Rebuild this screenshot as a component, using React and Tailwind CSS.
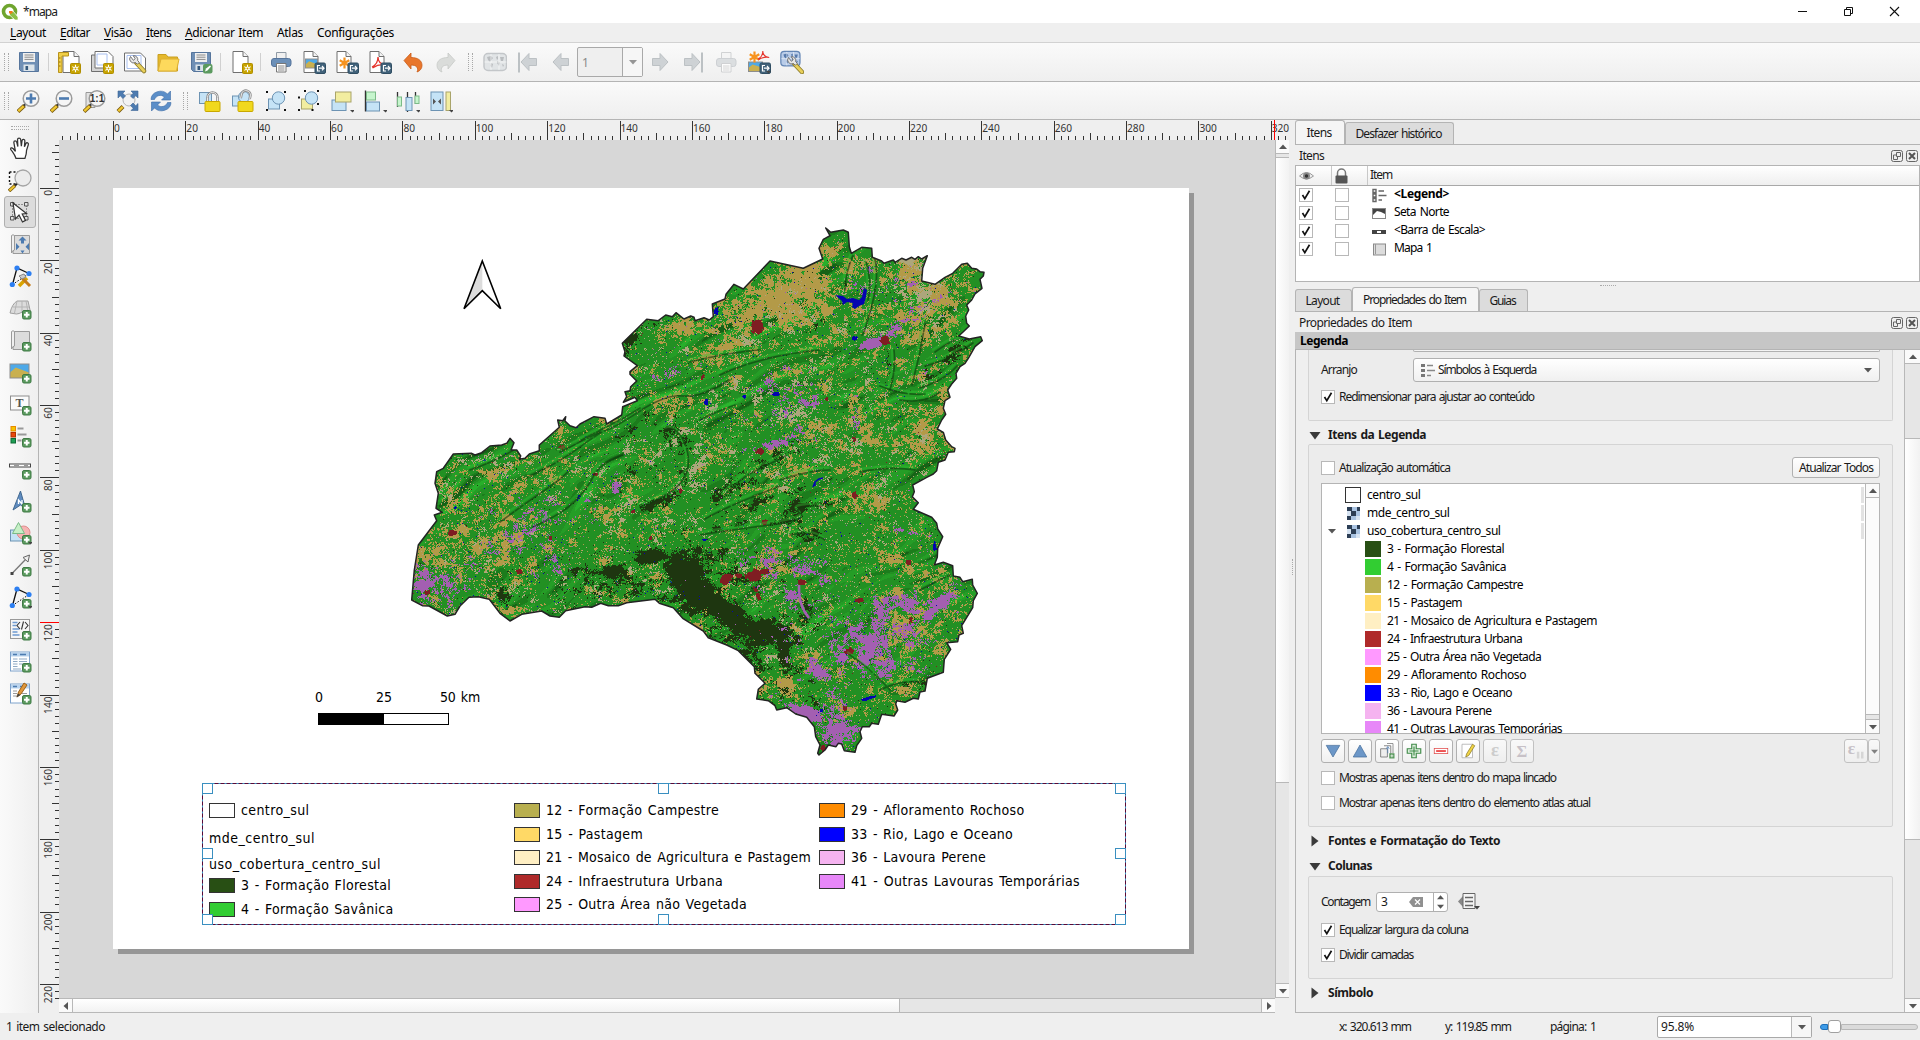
import React, { useLayoutEffect, useRef } from "react";

/* ---------- text that is tracked to an exact width ---------- */
function Fit({ w, className = "", children }) {
  const ref = useRef(null);
  useLayoutEffect(() => {
    const el = ref.current;
    el.style.letterSpacing = "0px";
    const n = el.textContent.length;
    const natural = el.getBoundingClientRect().width;
    el.style.letterSpacing = (w - natural) / n + "px";
  }, [w]);
  return (
    <span ref={ref} className={"inline-block whitespace-pre [word-spacing:1.2px] " + className}>
      {children}
    </span>
  );
}

/* ---------- map geometry (units: a third of a pixel) ---------- */
const third = (ox, oy, s) =>
  s.split(" ").map((p) => {
    const [x, y] = p.split(",").map(Number);
    return [ox + x / 3, oy + y / 3];
  });

const OUTLINE = [
  ...third(680, 200, "437,84 442,88 452,97 490,90 505,97 508,140 514,160 545,142 575,145 577,172 605,183 612,190 640,180 645,187 665,175 678,180 695,172 705,178 715,170 725,177 742,167 728,205 725,243 765,253 795,232 818,220 845,193 862,190 875,205 890,207 900,215 912,217 910,228 900,238 906,265 885,282 875,300 860,315 866,330 857,348 860,370 868,378 850,395 836,408 868,417 902,410 907,422 885,440 865,475 855,490 840,500 828,520 830,535 815,552 803,570 810,592 795,602 790,625 797,643 785,660 772,687 790,697 797,720 815,740 825,745 823,755 805,757 795,780 775,787 770,812 760,822 740,832 698,855 703,875 697,890"),
  ...third(620, 480, "895,68 880,88 935,112 950,130 953,147 968,170 953,205 952,232 943,255 970,247 998,257 1000,288 1020,292 1028,305 1057,298 1058,315 1072,340 1060,362 1058,383 1025,437 1030,460 1017,465 1013,485 980,488 992,508 973,538 970,577 922,595 915,633 900,636 895,657 880,655 855,667 830,662 827,672 833,690 822,708 785,703 775,733 755,730 748,740 727,740 720,755 725,775 710,797 705,817 673,812 665,792 655,790 648,800 625,795 615,810 597,825 593,820 600,795 587,770 583,740 560,712 527,702 500,683 470,690 465,677 445,662 410,657 415,628 435,610 405,580 403,560 355,512 320,495 265,473 250,453 188,415 160,383 118,370 105,358"),
  ...third(400, 200, "680,1208 655,1217 625,1217 602,1210 575,1222 555,1220 497,1232 478,1252 450,1248 425,1233 365,1243 330,1263 300,1240 268,1198 235,1190 207,1192 180,1218 165,1243 142,1248 87,1218 67,1217 35,1200 43,1110 55,1035 110,962 103,945 127,937 108,925 115,880 105,850 110,815 130,805 160,762 215,760 225,765 245,758 270,738 305,735 320,730 330,715 342,728 333,750 350,750 362,768 358,778 375,775 388,762 418,752 418,735 478,682 473,660 488,662 497,650 495,663 510,677 528,683 540,672 582,650 615,655 620,672 665,645 668,620 712,602 705,592 670,607 680,590 675,575 690,572 692,560 710,543 690,523 690,515 712,497 672,468 675,455 667,430 740,358 775,362 797,345 817,350 828,338 852,357 872,348 882,352 885,362 912,353 928,360 940,350 937,312"),
  ...third(680, 200, "135,297 138,283 162,253 190,267 270,183 370,205 428,177 417,145 430,118 450,107"),
];
const OUTLINE_PATH = "M" + OUTLINE.map(([x, y]) => x.toFixed(1) + " " + y.toFixed(1)).join("L") + "Z";

/* density fields: [x, y, rx, ry, degrees, strength] */
const TAN = [
  [785, 300, 80, 30, -18, 0.85], [812, 272, 34, 22, -15, 0.7], [730, 340, 60, 18, -20, 0.62], [685, 328, 16, 14, -30, 0.8], [690, 345, 40, 20, -20, 0.4],
  [925, 310, 44, 28, -35, 0.75], [905, 270, 34, 24, 0, 0.75], [938, 286, 22, 24, 0, 0.72], [905, 420, 50, 32, 25, 0.5],
  [928, 445, 24, 28, 0, 0.55], [855, 495, 55, 13, 0, 0.6], [460, 545, 85, 34, -5, 0.52], [510, 480, 70, 50, -30, 0.3],
  [570, 530, 80, 40, 0, 0.32], [775, 688, 34, 16, -10, 0.72], [812, 665, 22, 22, -40, 0.65], [905, 640, 65, 36, 0, 0.5],
  [765, 560, 40, 24, 0, 0.42], [665, 398, 28, 4, -22, 0.75], [858, 400, 20, 60, 0, 0.36], [850, 535, 40, 22, 0, 0.35],
  [945, 585, 30, 20, -40, 0.42], [540, 590, 60, 16, 0, 0.2], [440, 605, 35, 14, 20, 0.5], [840, 735, 20, 20, 0, 0.35],
  [947, 405, 12, 18, 0, 0.7], [927, 372, 40, 6, -22, 0.6], [628, 590, 5, 28, 10, 0.5], [750, 380, 80, 30, -20, 0.26], [790, 440, 60, 40, -20, 0.24],
];
const SAND = [
  [908, 258, 30, 14, 0, 0.62], [930, 290, 24, 34, 0, 0.4], [765, 652, 18, 9, 20, 0.5], [865, 335, 25, 20, 0, 0.36],
  [758, 590, 44, 22, 0, 0.3], [697, 467, 10, 12, 0, 0.38], [737, 610, 10, 4, 10, 0.5], [800, 635, 18, 20, 0, 0.35], [740, 335, 30, 20, 0, 0.22], [700, 470, 250, 130, -20, 0.2],
];
const FOREST = [
  [652, 556, 17, 7, -4, 1.2], [684, 567, 20, 16, 10, 1.3], [697, 588, 26, 19, 50, 1.4], [728, 614, 36, 13, 38, 1.4],
  [765, 630, 30, 10, 15, 1.3], [784, 652, 9, 22, 0, 0.9], [612, 574, 13, 16, -50, 0.95], [600, 585, 28, 17, 0, 0.55], [575, 575, 14, 9, 0, 0.35],
  [675, 440, 12, 24, -15, 0.5], [683, 475, 8, 18, 20, 0.55], [655, 502, 28, 5, -25, 0.55], [800, 507, 30, 6, -8, 0.5], [812, 533, 16, 5, 0, 0.5],
  [765, 462, 32, 7, -30, 0.55], [740, 484, 28, 7, -35, 0.55], [638, 332, 22, 6, -38, 0.7], [626, 350, 4, 14, 0, 0.6],
  [765, 665, 50, 20, 35, 0.4], [735, 578, 40, 18, 0, 0.38], [755, 524, 60, 3, -5, 0.5], [740, 510, 60, 4, -20, 0.45],
  [947, 358, 18, 5, -40, 0.6], [905, 685, 18, 5, -10, 0.5], [848, 273, 3, 20, 12, 0.4], [890, 365, 4, 20, 10, 0.35], [800, 622, 24, 16, 0, 0.45],
  [718, 553, 14, 8, 0, 0.6], [505, 595, 12, 10, 0, 0.36], [813, 330, 6, 10, 30, 0.45], [640, 585, 18, 14, 0, 0.42], [642, 425, 24, 8, -20, 0.38], [640, 470, 20, 14, -40, 0.36], [712, 613, 40, 22, 38, 0.55],
];
const PLUM = [
  [868, 640, 56, 28, -5, 0.66], [900, 605, 28, 12, 0, 0.7], [938, 606, 22, 6, -40, 1.2], [888, 668, 14, 8, -50, 1], [820, 672, 14, 8, 30, 0.85],
  [835, 732, 22, 26, 0, 0.85], [808, 712, 28, 7, 18, 1.1], [425, 580, 13, 17, 10, 0.85], [440, 575, 26, 22, 0, 0.42],
  [872, 343, 13, 4, -15, 2], [894, 330, 12, 5, -45, 0.75], [770, 560, 30, 10, 0, 0.42], [790, 600, 8, 18, 0, 0.55],
  [800, 575, 36, 14, 0, 0.38], [785, 400, 30, 22, 0, 0.38], [770, 445, 40, 5, -12, 0.5], [855, 410, 3, 22, 0, 0.5],
  [640, 380, 60, 4, -15, 0.45], [550, 565, 20, 12, 0, 0.42], [925, 375, 25, 4, -25, 0.6], [912, 283, 6, 5, 0, 0.5], [530, 535, 50, 30, -20, 0.25],
  [910, 532, 20, 2, 10, 0.6], [905, 555, 10, 8, 0, 0.42], [840, 690, 14, 10, 0, 0.45], [876, 720, 4, 4, 0, 0.7], [616, 485, 6, 10, 0, 0.4], [900, 290, 40, 30, 0, 0.22],
];
const URBAN = [
  [757, 327, 5, 6, 0, 1.5], [885, 340, 4, 4, 0, 1.4], [753, 576, 9, 6, 0, 1.3], [764, 571, 4, 3, 0, 1.3], [726, 578, 6, 4, -30, 1.2], [738, 575, 4, 3, 0, 1],
  [756, 592, 3, 10, -20, 0.9], [452, 532, 5, 3, 0, 1.1], [561, 446, 4, 3, 0, 0.9], [849, 651, 5, 4, 0, 1], [860, 600, 5, 2.5, 0, 1], [910, 620, 3, 4, 0, 1],
  [802, 582, 5, 3, 0, 0.9], [760, 451, 4, 3, 0, 1], [854, 439, 3, 3, 0, 0.9], [854, 494, 3, 3, 0, 1], [823, 748, 3, 4, 0, 1], [844, 709, 3, 4, 0, 0.7],
  [519, 571, 3, 3, 0, 0.9], [595, 474, 3, 2, 0, 0.9], [680, 490, 2, 3, 0, 0.9], [550, 538, 2, 3, 0, 0.9], [764, 522, 3, 3, 0, 0.9], [650, 537, 2, 3, 0, 0.9], [908, 562, 3, 3, 0, 0.9], [427, 592, 3, 2, 0, 1], [826, 398, 2, 3, 0, 0.9], [633, 511, 3, 2, 0, 0.9], [702, 377, 2, 3, 0, 0.9],
];
const WATER = [
  [716, 310, 3, 5, 0, 0.8], [775, 394, 4, 2, 0, 1.3], [854, 338, 3, 2, 0, 1.3], [578, 498, 2.500, 5, 30, 0.75], [706, 402, 2, 4, 10, 0.9],
  [455, 507, 2, 2, 0, 0.8], [744, 396, 1.500, 2, 0, 1], [821, 710, 1.500, 1.500, 0, 1.500], [867, 698, 8, 1.500, -15, 0.9], [704, 539, 3, 1.500, 0, 0.8], [484, 460, 2, 1, 0, 1], [934, 545, 1.500, 4, 0, 0.9],
];

const hash = (x, y, s) => {
  let h = (x * 374761393 + y * 668265263 + s * 974634777) | 0;
  h = Math.imul(h ^ (h >>> 13), 1274126177);
  h = Math.imul(h ^ (h >>> 15), 2246822519);
  return ((h ^ (h >>> 16)) >>> 0) / 4294967296;
};
const noise = (x, y, s) => {
  const xi = Math.floor(x), yi = Math.floor(y);
  let fx = x - xi, fy = y - yi;
  fx = fx * fx * (3 - 2 * fx);
  fy = fy * fy * (3 - 2 * fy);
  const a = hash(xi, yi, s), b = hash(xi + 1, yi, s), c = hash(xi, yi + 1, s), d = hash(xi + 1, yi + 1, s);
  return a + (b - a) * fx + (c - a) * fy + (a - b - c + d) * fx * fy;
};
const prepare = (list) =>
  list.map(([x, y, rx, ry, deg, k]) => ({ x, y, rx, ry, k, c: Math.cos((deg * Math.PI) / 180), s: Math.sin((deg * Math.PI) / 180), r: Math.max(rx, ry) * 2 }));
const field = (list, x, y) => {
  let v = 0;
  for (const b of list) {
    const dx = x - b.x, dy = y - b.y;
    if (dx > b.r || dx < -b.r || dy > b.r || dy < -b.r) continue;
    const u = (dx * b.c + dy * b.s) / b.rx, w = (dy * b.c - dx * b.s) / b.ry;
    v = Math.max(v, b.k * Math.exp(-(u * u + w * w) * 0.8));
  }
  return v;
};

const terrain = (x, y) => {
  const wx = x + noise(x / 60, y / 60, 9) * 40, wy = y + noise(x / 60, y / 60, 10) * 40;
  const a = -0.5;
  const u = wx * Math.cos(a) + wy * Math.sin(a), v = -wx * Math.sin(a) + wy * Math.cos(a);
  return noise(u / 55, v / 10, 1) * 1.3 + noise(u / 22, v / 6, 2) * 0.5 + noise(x / 8, y / 6, 3) * 0.15;
};

function buildMap() {
  const X0 = 410, X1 = 986, Y0 = 226, Y1 = 757;
  const classes = ["#b39a48", "#ada67c", "#1e3610", "#a35fb1", "#7f1d22", "#0404b0"];
  const shades = ["#124f12", "#1a741b", "#27a329", "#2cbc2f"];
  const cover = classes.map(() => []);
  const relief = shades.map(() => []);
  const sets = [TAN, SAND, FOREST, PLUM, URBAN, WATER].map(prepare);
  const stray = [0.018, 0.012, 0.006, 0.003, 0.0006, 0.0025];
  for (let y = Y0; y < Y1; y++) {
    let rc = -1, rs = X0, sc = -1, ss = X0;
    for (let x = X0; x <= X1; x++) {
      let c = -1, s = -1;
      if (x < X1) {
        const white = hash(x, y, 30);
        for (let i = 5; i >= 0; i--) {
          let f = field(sets[i], x, y);
          if (i === 0) f = Math.max(f, 0.1 + 0.22 * noise(x / 50, y / 40, 60));
          if (f > 0.05) {
            const n = noise(x / 14, y / 10, 20 + i) * 0.3 + noise(x / 5, y / 4, 26 + i) * 0.3 + noise(x / 1.8, y / 1.8, 33 + i) * 0.22 + white * 0.18;
            const slope = i > 3 ? 0.8 : 0.48;
            if (n < 0.5 + (f - 0.52) * slope) { c = i; break; }
          }
          if (hash(x, y, 40 + i) < stray[i]) { c = i; break; }
        }
        const g = terrain(x + 1, y + 1) - terrain(x - 1, y - 1);
        const q = g * (0.35 + noise(x / 60, y / 45, 50) * 1.5);
        s = q > 0.42 ? 0 : q > 0.2 ? 1 : q < -0.42 ? 3 : q < -0.17 ? 2 : -1;
      }
      if (c !== rc) { if (rc >= 0) cover[rc].push(`M${rs} ${y}h${x - rs}v1h${rs - x}z`); rc = c; rs = x; }
      if (s !== sc) { if (sc >= 0) relief[sc].push(`M${ss} ${y}h${x - ss}v1h${ss - x}z`); sc = s; ss = x; }
    }
  }
  return {
    cover: classes.map((fill, i) => ({ fill, d: cover[i].join("") })),
    relief: shades.map((fill, i) => ({ fill, d: relief[i].join("") })),
  };
}
const MAP = buildMap();

const RIDGES = [
  "M530 476Q560 462 580 447T607 430 640 411 683 396 730 380", "M580 441Q600 430 622 419L640 408", "M560 452L600 432",
  "M640 507Q660 500 673 490T688 467 683 440 667 430", "M533 527Q560 515 573 503T593 477 623 455", "M500 522Q530 500 545 490T570 470",
  "M845 290Q846 270 853 256M866 262Q872 280 868 300M874 255Q880 275 872 305T862 335M890 390Q896 370 894 350M912 385Q918 360 922 345M920 350L926 320",
  "M925 366Q950 360 973 343M920 388Q945 380 957 366M880 386Q905 396 925 394M900 400Q925 404 940 392M935 352Q945 345 955 340",
  "M700 535Q730 530 770 525T800 513 822 506M705 519Q725 508 745 500T780 486M725 495Q740 478 757 470T787 455M780 480Q810 470 830 470",
  "M690 362Q730 352 760 350M720 375Q760 356 820 350M700 420Q720 410 735 405M790 535Q810 530 825 540M860 472Q890 466 915 470M470 470Q500 460 530 440",
  "M880 690Q900 680 920 682M850 655Q870 668 890 690M920 590Q935 582 950 575",
];

function MapDrawing() {
  return (
    <svg className="absolute left-[340px] top-[76px]" width="600" height="560" viewBox="399 216 600 560">
      <clipPath id="area"><path d={OUTLINE_PATH} /></clipPath>
      <g clipPath="url(#area)">
        <rect x="399" y="216" width="600" height="560" fill="#239124" />
        <g opacity="0.7">{MAP.relief.map((p) => <path key={p.fill} d={p.d} fill={p.fill} />)}</g>
        <g shapeRendering="crispEdges">{MAP.cover.map((p) => <path key={p.fill} d={p.d} fill={p.fill} />)}</g>
        <g fill="none" strokeLinecap="round">
          {RIDGES.map((d) => <path key={d} d={d} stroke="#2fc432" strokeWidth="2.500" opacity="0.4" transform="translate(-2 -2.500)" />)}
          {RIDGES.map((d) => <path key={d} d={d} stroke="#0d3a0e" strokeWidth="1.700" opacity="0.6" strokeDasharray="17 2 9 3 24 1" />)}
        </g>
        <path d="M835 295l8 1 4 3 6-1 6 2 3-3 2-9 3 2-1 7-2 7-5 2-4 3-3-2 1-4-6-1-4 3-1-4z" fill="#0404b0" />
        <path d="M813 487l2-5 4-3 4-1M815 482v4" stroke="#0404b0" strokeWidth="1.5" fill="none" />
        <path d="M799 585q-1 20 10 33" stroke="#a35fb1" strokeWidth="2.500" fill="none" />
      </g>
      <path d={OUTLINE_PATH} fill="none" stroke="#232323" strokeWidth="1.5" strokeLinejoin="round" />
    </svg>
  );
}

/* ---------- icons ---------- */
const Svg = ({ children, s = 24, vb = "0 0 24 24", className = "" }) => (
  <svg width={s} height={s} viewBox={vb} fill="none" className={"shrink-0 " + className}>{children}</svg>
);
const Plus = () => (
  <g><rect x="14.5" y="14.5" width="8.5" height="8.5" rx="1.5" fill="#5b9a5f" stroke="#3f7a45" /><path d="M18.75 16v5.5M16 18.75h5.5" stroke="#fff" strokeWidth="2" /></g>
);
const Star = () => (
  <g><rect x="13.5" y="13.5" width="10" height="10" rx="1" fill="#c8a400" stroke="#b08e00" /><path d="M18.5 14.8v7.4M15.3 16.6l6.4 3.8M21.7 16.6l-6.4 3.8" stroke="#fff" strokeWidth="1.1" /><circle cx="18.5" cy="18.5" r="2" fill="#fff" /><circle cx="18.5" cy="18.5" r="1" fill="#c8a400" /></g>
);
const Export = () => (
  <g><rect x="13" y="13" width="10.5" height="10.5" rx="1.5" fill="#41627a" stroke="#2f4d62" /><path d="M18 15.5h-2.5v5.5H18M17 18.2h5M20 16l2 2.2-2 2.2" stroke="#fff" strokeWidth="1.2" /></g>
);
const Caret = ({ x = 20, y = 21 }) => <path d={`M${x} ${y}h5l-2.5 2.6z`} fill="#444" />;
const Floppy = () => (
  <g><path d="M2.5 2.5h19v19h-17l-2-2z" fill="#6f8fb5" stroke="#56759c" /><path d="M6 3h12v9H6z" fill="#f0f0f0" /><path d="M7.5 5h9M7.5 7.2h9M7.5 9.4h9" stroke="#8a8a8a" /><path d="M6.5 14.5h11V21h-11z" fill="#dce4ea" /><path d="M8.5 16h2.6v4H8.500z" fill="#35597d" /></g>
);
const Page = ({ x = 5, w = 15 }) => (
  <g><path d={`M${x} 1.500h${w - 5}l5 5V22.500h${-w}z`} fill="#fff" stroke="#6f6f6f" /><path d={`M${x + w - 5} 1.500v5h5`} stroke="#6f6f6f" fill="#f4f4f4" /></g>
);
const Wrench = () => (
  <g><path d="M13.500 13l7.500 8" stroke="#8a7a2a" strokeWidth="4.500" strokeLinecap="round" /><path d="M14 13.500l7 7.500" stroke="#e8cf5a" strokeWidth="2.800" strokeLinecap="round" /><path d="M7.500 6.500a4 4 0 0 0 5 6l1.800 1.800 2-2-1.600-1.600a4 4 0 0 0-4.500-5l2 3-1.800 1.600z" fill="#e6e6e6" stroke="#6a6a6a" strokeWidth=".9" /></g>
);
const Sunset = ({ y = 8, h = 13, x = 2, w = 19 }) => (
  <g><rect x={x} y={y} width={w} height={h} fill="#4ea9e8" /><path d={`M${x} ${y + h * 0.6}l${w * 0.3}-${h * 0.35} ${w * 0.7} ${h * 0.35}v${h * 0.4}h${-w}z`} fill="#c9b050" /><rect x={x} y={y} width={w} height={h} stroke="#8d8d8d" /></g>
);
const Printer = ({ off }) => (
  <g opacity={off ? 0.75 : 1}><path d="M7.500 2.500h9.500V10h-9.500z" fill={off ? "#f4f4f4" : "#f0f0f0"} stroke={off ? "#c4c6c8" : "#8f9aa5"} /><rect x="2.500" y="8.500" width="19.500" height="8" rx="2.500" fill={off ? "#d3d7da" : "#6c90b8"} stroke={off ? "#c0c4c8" : "#56759c"} /><path d="M7.500 13.500h9.500v8.500h-9.500z" fill="#fff" stroke={off ? "#c4c6c8" : "#777"} /><path d="M9 16h6.500M9 18h6.500M9 20h6.500" stroke={off ? "#ccc" : "#888"} /></g>
);
const Asterisk = ({ x = 10, y = 10, r = 5.5 }) => (
  <path d={`M${x} ${y - r}v${2 * r}M${x - r * 0.87} ${y - r / 2}l${r * 1.74} ${r}M${x + r * 0.87} ${y - r / 2}l${-r * 1.74} ${r}`} stroke="#f7931e" strokeWidth="2.200" />
);
const Acrobat = ({ t = "" }) => <path transform={t} d="M5 15c4-2 6-6 6-10 0 5 3 7.500 8 8-5-1-9 0-13.500 3" stroke="#e5342c" strokeWidth="1.300" fill="none" />;
const Globe = ({ off }) => (
  <g><rect x="1" y="3.500" width="22.500" height="17" rx="4" fill={off ? "#e1e4e6" : "#b9cce8"} stroke={off ? "#c3c6c9" : "#6486b5"} strokeWidth="1.500" /><path d="M4 7l4-1 2 2-3 4-2-2zM8 13l2 1-1 4-1.500-2zM13 7l2-1v3l-1 1zM14 11l3 1-1 4-2-3zM17 7l4 0-1 4-2 0zM19 14l2 1-1 2z" fill={off ? "#b9bcbf" : "#5679ab"} /><path d="M1.500 12h22M8 4v16M16 4v16" stroke="#fff" strokeWidth=".6" /></g>
);
const ArrowH = ({ flip, bar }) => (
  <g transform={flip ? "translate(24 0) scale(-1 1)" : ""}><path d={bar ? "M5 12l8-8.500v5h7.500v7H13v5z" : "M4 12l8-8.500v5h7.500v7H12v5z"} fill="#ced2d5" stroke="#bcc1c4" />{bar && <path d="M3 2.500v20" stroke="#bcc1c4" strokeWidth="2" />}</g>
);
const Lens = ({ children }) => (
  <g transform="translate(-1 0)"><path d="M2 22.500l6.500-6" stroke="#7a5a10" strokeWidth="4" /><path d="M2.300 22.200l5.400-5" stroke="#f0c832" strokeWidth="2.400" /><path d="M8 16.500l2-2" stroke="#333" strokeWidth="2" /><circle cx="15" cy="9.500" r="7.800" fill="#f5f5f5" stroke="#9b9b9b" strokeWidth="1.500" />{children}</g>
);
const Four = ({ k = "#4d7bb0" }) => (
  <path d="M2 2h7L6.800 4.200 9.500 7 7 9.500 4.200 6.800 2 9zM22 2h-7l2.200 2.200L14.500 7 17 9.500l2.800-2.700L22 9zM22 21.500h-7l2.200-2.200-2.700-2.800 2.500-2.500 2.800 2.700 2.200-2.200z" fill={k} stroke="#3c6596" strokeWidth=".6" />
);
const Padlock = ({ open }) => (
  <g><path d={open ? "M10 10V6a4.500 4.500 0 0 1 9 0v3" : "M9.500 13V8.500a5 5 0 0 1 10 0V13"} transform={open ? "rotate(12 14 8)" : ""} stroke="#8b8b8b" strokeWidth="2.600" /><path d={open ? "M10 10V6a4.500 4.500 0 0 1 9 0v3" : "M9.500 13V8.500a5 5 0 0 1 10 0V13"} transform={open ? "rotate(12 14 8)" : ""} stroke="#e9e9e9" strokeWidth="1" /><rect x="7" y="12.500" width="15" height="10" rx="1" fill="#f0d81e" stroke="#c9a800" /></g>
);
const Bl = (p) => <rect fill="#c5e3f6" stroke="#6d93b3" {...p} />;
const Ye = (p) => <rect fill="#f2eda0" stroke="#a9a46a" {...p} />;
const Gr = (p) => <rect fill="#c6f5cd" stroke="#7cba88" {...p} />;
const Corners = ({ x0 = 2, y0 = 2, x1 = 21, y1 = 21 }) => (
  <path d={`M${x0 + 6} ${y0}h0M${x1} ${y0}h0M${x0} ${y1}h0M${x1} ${y1 - 6}h0M${(x0 + x1) / 2 + 4} ${y1}h0M${x0} ${(y0 + y1) / 2 - 3}h0`} stroke="#111" strokeWidth="2" strokeLinecap="square" />
);
const Nodes = () => (
  <g><path d="M4.500 20.500L9 4l12 5.500" stroke="#111" strokeWidth="1.300" /><path d="M4.500 20.500L21 9.500" stroke="#111" strokeDasharray="1.500 1.500" /><circle cx="9" cy="4" r="2.600" fill="#2d7ff2" /><circle cx="21" cy="9.500" r="2.600" fill="#2d7ff2" /><circle cx="4.300" cy="20.500" r="2.600" fill="#2d7ff2" /></g>
);
const Scroll = () => (
  <g><path d="M6 3.500h15.500v18H5z" fill="#dcdcdc" stroke="#9a9a9a" /><path d="M3.500 21V3.500q1.500-1.500 3 0V18q-2 0-3 3z" fill="#f0f0f0" stroke="#9a9a9a" /></g>
);
const Table = ({ children }) => (
  <g><rect x="2.500" y="3" width="19" height="19" fill="#fff" stroke="#7fa3cc" /><rect x="3" y="3.500" width="18" height="4" fill="#bad4ee" /><path d="M5 5.500h4M12 5.500h6" stroke="#4d7bb0" strokeWidth="1.500" />{children}</g>
);
const Undo = ({ c, b }) => <path d="M3 10.500L10 3v4.500c7 0 11 3 11 8 0 3-2 5.500-5 6.500 2-4-.500-7-6-7v4z" fill={c} stroke={b} strokeWidth=".8" />;

const icons = {
  save: <Floppy />,
  layoutNew: <g><Page x={6} w={16} /><path d="M1.500 2.500h10v3.500h-6.500v16.500h-3.500z" fill="#f0cf48" stroke="#b8921c" /><path d="M2 8h1.500M2 12h1.500M2 16h1.500" stroke="#8a6a10" /><Star /></g>,
  layoutDup: <g><path d="M1.500 5h14v16.500h-14z" fill="#d4d4d4" stroke="#6f6f6f" /><path d="M5 1.500h13l5 5V18H5z" fill="#fff" stroke="#6f6f6f" /><path d="M7 4h10v11H7z" stroke="#a9c0f0" /><Star /></g>,
  layoutMgr: <g><path d="M1.500 3h16l5 5v13h-21z" fill="#fff" stroke="#6f6f6f" /><path d="M4 5.500h14v13H4z" stroke="#a9c0f0" /><Wrench /></g>,
  folder: <g><path d="M2 21V4.500h8l2 2.500h9.500V21z" fill="#e5b82c" stroke="#c99f20" /><path d="M2 21L5 9h18l-2.500 12z" fill="#fdd95c" stroke="#dcb034" /></g>,
  saveAs: <g><Floppy /><rect x="14" y="14" width="9.500" height="9.500" rx="2" fill="#5b9a5f" /><path d="M16 21.500l1-3 4-3 1 1-3.500 4z" fill="#fff" /></g>,
  pageAdd: <g><Page x={4} w={15} /><Star /></g>,
  print: <Printer />,
  exImg: <g><Page x={2} w={14} /><Sunset x={3.500} y={9} w={12} h={9} /><Export /></g>,
  exSvg: <g><Page x={2} w={14} /><Asterisk x={9.500} y={13} r={5.5} /><Export /></g>,
  exPdf: <g><Page x={2} w={14} /><Acrobat t="translate(-1 2)" /><Export /></g>,
  undo: <Undo c="#e8762c" b="#c95c18" />,
  redo: <g transform="translate(24 0) scale(-1 1)"><Undo c="#dadcda" b="#c6c9c6" /></g>,
  atlas: <Globe off />,
  first: <ArrowH bar />, prev: <ArrowH />, next: <ArrowH flip />, last: <ArrowH flip bar />,
  printOff: <Printer off />,
  exAll: <g><Sunset x={1.500} y={12} w={14} h={9.500} /><Asterisk x={7.500} y={7} r={5.500} /><Acrobat t="translate(7 -3) scale(.8)" /><Export /><Caret x={19} y={21} /></g>,
  atlasSet: <g><g transform="translate(0 -1.500) scale(.85)"><Globe /></g><g transform="translate(1 1)"><Wrench /></g></g>,
  zoomIn: <Lens><path d="M15 4.500v10M10 9.500h10" stroke="#4d7bb0" strokeWidth="2.600" /></Lens>,
  zoomOut: <Lens><path d="M10 9.500h10" stroke="#4d7bb0" strokeWidth="2.600" /></Lens>,
  zoomOne: <g><path d="M3 3.500h9v15H3z" fill="#e2e2e2" stroke="#999" /><Lens><text x="15" y="13" textAnchor="middle" fontSize="10" fontWeight="700" fill="#333" fontFamily="Liberation Sans">1:1</text></Lens></g>,
  zoomFull: <g><path d="M2 22.500l5-5" stroke="#7a5a10" strokeWidth="4" /><path d="M2.300 22.200l4.400-4.400" stroke="#f0c832" strokeWidth="2.400" /><circle cx="13" cy="11" r="6" fill="#f2f2f2" stroke="#b5b5b5" /><Four /></g>,
  refresh: <g fill="#5b8ec8" stroke="#3c6ba6" strokeWidth=".6"><path d="M2 10.500A9.500 8.500 0 0 1 18.500 5L21.500 2v9h-9l3-3C12 5 7 6.500 5.500 10.500z" /><path d="M22 13.500A9.500 8.500 0 0 1 5.500 19L2.500 22v-9h9l-3 3c3.500 3 8.500 1.500 10-2.500z" /></g>,
  lock: <g><Bl x="1.500" y="3.500" width="12" height="11" /><Padlock /></g>,
  unlock: <g><Bl x="1.500" y="7" width="11" height="10" /><circle cx="13" cy="8" r="5.500" fill="#c5e3f6" stroke="#6d93b3" /><Padlock open /></g>,
  group: <g><Bl x="4.500" y="10" width="11" height="10" /><circle cx="14.500" cy="9" r="6.200" fill="#c5e3f6" stroke="#6d93b3" /><path d="M3 3h0M21 3h0M3 21h0M21 21h0" stroke="#111" strokeWidth="2" strokeLinecap="square" /></g>,
  ungroup: <g><Ye x="4.500" y="10" width="11" height="10" /><circle cx="14.500" cy="9" r="6.200" fill="#c5e3f6" stroke="#6d93b3" /><Corners /></g>,
  raise: <g><Bl x="2" y="11" width="14" height="10.500" /><Ye x="5.500" y="3" width="15.500" height="10" /><Caret /></g>,
  align: <g><path d="M2.500 1.500v21" stroke="#333" strokeWidth="1.400" /><Gr x="3.500" y="3" width="9" height="8" /><Bl x="3.500" y="13" width="13" height="9" /><Caret /></g>,
  distribute: <g><path d="M1.500 3v15M11.500 3v20M19.500 3v12" stroke="#333" strokeWidth="1.300" /><Gr x="1.500" y="8" width="4" height="9" /><Bl x="10" y="8.500" width="6" height="13" /><Gr x="19" y="7" width="4" height="7.500" /><Caret /></g>,
  resize: <g><Bl x="2" y="3" width="12" height="18.500" /><path d="M4 9.500l3 3-3 3zM12 9.500l-3 3 3 3z" fill="#555" /><Ye x="17" y="3" width="4.500" height="18.500" /><Caret /></g>,
  hand: <g transform="translate(0 -.5) scale(1.060)"><path d="M7.500 21.500q-1-3-3.500-6.500-2-2-1.500-3t2.500.500l2 2.500-1.500-8.500q0-1.500 1.200-1.500t1.600 1.500l1 4-.3-6.500q0-1.600 1.400-1.600T12 4l.6 6 .6-5q.2-1.400 1.500-1.300t1.200 1.500l-.4 5.500 1.400-3.200q.6-1 1.600-.6t.7 1.700L17.500 14q0 4-1.500 7.500z" fill="#fff" stroke="#333" strokeWidth="1.200" /></g>,
  zoomTool: <g><path d="M1.500 4h9M1.500 4v12h8" stroke="#111" strokeWidth="1.400" strokeDasharray="2 2" /><path d="M1 23l6-5.500" stroke="#7a5a10" strokeWidth="3.500" /><path d="M1.500 22.600l5-4.600" stroke="#f0c832" strokeWidth="2" /><path d="M7 17.500l3-2.500" stroke="#222" strokeWidth="2" /><circle cx="15" cy="10" r="8" fill="#ececec" stroke="#a5a5a5" strokeWidth="1.300" /></g>,
  select: <g><rect x="4.500" y="4.500" width="14" height="14" stroke="#444" strokeDasharray="1 2" /><path d="M2.500 2.500h3.500v3.500H2.500zM16.500 2.500H20v3.500h-3.500zM2.500 16.500h3.500V20H2.500zM16.500 16.500H20V20h-3.500z" fill="#e0e0e0" stroke="#555" /><path d="M5 3l2.500 16 3.500-4 3.500 7 3-1.600-3.300-6.400 4.300-.5z" fill="#fff" stroke="#333" strokeWidth="1.200" /></g>,
  moveContent: <g><Scroll /><path d="M14.500 4.500l4 4h-2.500v3h-3v-3h-2.500zM14.500 21.500l-2-3h4zM8 11l3.500 3.700L8 18.200zM21 11l-3.500 3.700 3.500 3.500z" fill="#4d7bb0" /></g>,
  editNodes: <g><Nodes /><path d="M11 22l8-8" stroke="#d9a400" strokeWidth="3.500" /><path d="M14 14l8 8" stroke="#c57b1a" strokeWidth="3" /><path d="M11 12l5-2 2 3-4 2z" fill="#ccc" stroke="#888" /></g>,
  map3d: <g><path d="M2 17q2-9 7-12h11l2.500 11q-4-2-8 0t-6 2z" fill="#dcdcdc" stroke="#a0a0a0" /><path d="M5 11h16M9 5L6.500 17M14 5v11M18 5l2 11" stroke="#b5b5b5" /><Plus /></g>,
  map: <g><Scroll /><Plus /></g>,
  picture: <g><Sunset y={4} h={14} x={2} w={19} /><Plus /></g>,
  label: <g><rect x="2.500" y="4" width="18.500" height="14" fill="#fbfbfb" stroke="#8d8d8d" /><text x="11.500" y="15" textAnchor="middle" fontSize="12" fontWeight="700" fill="#555" fontFamily="Liberation Serif">T</text><Plus /></g>,
  legend: <g><rect x="3" y="2.500" width="4.500" height="4.500" fill="#f5c400" stroke="#e88a00" /><rect x="3" y="8.500" width="4.500" height="4.500" fill="#e8480c" stroke="#b03000" /><rect x="3" y="14.500" width="4.500" height="4.500" fill="#1e9e54" stroke="#0e6a34" /><path d="M9.500 4.500h6M9.500 10.500h9M9.500 16.500h4" stroke="#999" strokeWidth="1.800" /><Plus /></g>,
  scalebar: <g><rect x="1.500" y="8" width="21" height="3" fill="#fff" stroke="#444" /><path d="M6 9.500h5M16 9.500h4" stroke="#999" strokeWidth="2" /><Plus /></g>,
  north: <g><path d="M12.500 2L5 21l7.500-5 5 3.500z" fill="#5f8cc0" stroke="#41688f" /><path d="M10.500 15v-4l3.500 4v-4" stroke="#fff" strokeWidth="1.300" /><Plus /></g>,
  shape: <g><Bl x="2.500" y="9" width="12" height="11" /><circle cx="15.500" cy="11.500" r="6.500" fill="#f6b3b3" stroke="#df8d8d" /><path d="M10.500 1.500l6 11h-12z" fill="#c6f0c6" stroke="#7cba88" /><Plus /><Caret x={20} y={21} /></g>,
  arrow: <g><path d="M4 20.500L18 6" stroke="#777" strokeWidth="1.300" /><path d="M21.500 2l-1.500 7-5-4.500z" fill="#eee" stroke="#666" /><rect x="2.500" y="19" width="3" height="3" fill="#444" /><Plus /></g>,
  nodes: <g><Nodes /><Plus /><Caret x={20} y={21} /></g>,
  html: <g><rect x="2.500" y="2.500" width="19" height="19" fill="#f6f6f6" stroke="#999" /><path d="M4.500 5.500h5M4.500 8.500h4M4.500 12h7M4.500 15h5M4.500 18h7" stroke="#6f9bd1" strokeWidth="1.500" /><path d="M12 5L9 8.500 12 12M17 5l3 3.500-3 3.500M15.500 4.500l-2 8" stroke="#333" strokeWidth="1.100" /><Plus /></g>,
  table: <Table><path d="M5 10h4.500M11 10h8M5 12.500h4.500M11 12.500h8M5 15h4.500M11 15h4M5 17.500h4.500M5 20h8" stroke="#8fa9c4" /><Plus /></Table>,
  fixed: <Table><path d="M5 10h4M5 12.500h4M14 12.500h5M5 15h4" stroke="#9a9a9a" /><path d="M9 16l1.500-5L16 2l3 2-6 9z" fill="#e0973c" stroke="#a06418" /><path d="M8.500 16.500l1.500-4 2.500 1.500z" fill="#444" /><Plus /></Table>,
};

const Tool = ({ n }) => <div className="flex h-full w-[33px] shrink-0 items-center justify-center"><Svg>{icons[n]}</Svg></div>;
const Sep = () => <div className="flex w-[7px] shrink-0 justify-center"><div className="h-[18px] w-px bg-[#d0d0d0]" /></div>;
const Grip = ({ className = "" }) => (
  <div className={"flex shrink-0 justify-center gap-[3px] " + className}>
    <div className="h-[18px] w-0 border-l border-dotted border-[#a8a8a8]" /><div className="h-[18px] w-0 border-l border-dotted border-[#a8a8a8]" />
  </div>
);

/* ---------- small widgets ---------- */
const Check = ({ on }) => (
  <div className="flex h-[14px] w-[14px] shrink-0 items-center justify-center border border-[#b8b8b8] bg-white">
    {on && <svg width="12" height="12" viewBox="0 0 12 12"><path d="M2.500 6l2.300 3.600L9.500 1.800" stroke="#111" strokeWidth="1.700" fill="none" /></svg>}
  </div>
);
const Tri = ({ dir, className = "", s = 8 }) => {
  const d = { up: "M0 6l4-4.500L8 6z", down: "M0 2l4 4.500L8 2z", left: "M6 0L1.500 4 6 8z", right: "M2 0l4.500 4L2 8z" }[dir];
  return <svg width={s} height={s} viewBox="0 0 8 8" className={"shrink-0 " + className}><path d={d} fill="#555" /></svg>;
};
const DockButtons = () => (
  <div className="flex gap-[3px] pr-[2px]">
    <svg width="12" height="12" viewBox="0 0 12 12" fill="none" stroke="#666"><rect x=".5" y=".5" width="11" height="11" rx="2" /><path d="M5.500 2.500h4v4h-4zM5.500 5h-3v4.500h4v-3" /></svg>
    <svg width="12" height="12" viewBox="0 0 12 12" fill="none" stroke="#666"><rect x=".5" y=".5" width="11" height="11" rx="2" /><path d="M3 3l6 6M9 3l-6 6" strokeWidth="2" stroke="#555" /></svg>
  </div>
);
const Tab = ({ w, t, active, children }) => (
  <div className={"flex shrink-0 items-center justify-center rounded-t-[3px] border border-b-0 border-[#b4b4b4] pr-[2px] pt-px " + (active ? "h-[24px] bg-[#f5f5f5]" : "h-[22px] border-b bg-[#dcdcdc]")} style={{ width: w }}>
    <Fit w={t}>{children}</Fit>
  </div>
);
const Section = ({ open, w, children }) => (
  <div className="flex h-[18px] items-center pl-[13px]">
    <div className="w-[19px]">
      <svg width="12" height="12" viewBox="0 0 12 12">{open ? <path d="M.5 3h11L6 10.500z" fill="#3a3a3a" /> : <path d="M2.500 .5v11L9.500 6z" fill="#3a3a3a" />}</svg>
    </div>
    <Fit w={w} className="font-bold">{children}</Fit>
  </div>
);
const Group = ({ className = "", children }) => (
  <div className={"ml-[12px] w-[585px] rounded-[2px] border border-[#d4d4d4] bg-[#ececec] " + className}>{children}</div>
);
const CheckRow = ({ on, w, className = "", children }) => (
  <div className={"flex h-[16px] items-center gap-[4px] " + className}><Check on={on} /><Fit w={w}>{children}</Fit></div>
);
const btn = "flex items-center justify-center rounded-[3px] border border-[#b0b0b0] bg-linear-to-b from-white to-[#f0f0f0]";

const legendRows = [
  ["#284f14", "3 - Formação Florestal", 117], ["#32cd32", "4 - Formação Savânica", 119], ["#b8af4f", "12 - Formação Campestre", 136],
  ["#ffd966", "15 - Pastagem", 75], ["#ffefc3", "21 - Mosaico de Agricultura e Pastagem", 210], ["#af2a2a", "24 - Infraestrutura Urbana", 135],
  ["#ff99ff", "25 - Outra Área não Vegetada", 154], ["#ff8c00", "29 - Afloramento Rochoso", 139], ["#0000ff", "33 - Rio, Lago e Oceano", 125],
  ["#f5b3f0", "36 - Lavoura Perene", 104.5], ["#e787f8", "41 - Outras Lavouras Temporárias", 175],
];
const Raster = () => (
  <svg width="13" height="13" viewBox="0 0 5 5" shapeRendering="crispEdges"><rect width="5" height="5" fill="#a9c3e2" /><path d="M0 0h2v1.700H0zM4 0h1v1.700H4zM1.700 1.700h1.700v1.700H1.700zM0 3.400h1.700V5H0z" fill="#2c3e55" /><path d="M3.300 3.300H5V5H3.300zM0 1.700h1.700v1.700H0z" fill="#d6e3f2" /></svg>
);

const legendBtns = [
  <path d="M3 4.500h18L12 20z" fill="#6c97c8" stroke="#4a719e" />,
  <path d="M3 20h18L12 4z" fill="#6c97c8" stroke="#4a719e" />,
  <g><path d="M3.500 9h9v11h-9z" stroke="#666" fill="#eee" /><path d="M8 5h9v12" stroke="#666" /><path d="M12 2h8v13" stroke="#777" /><path d="M13 7v8M11 9l2-3 2 3" stroke="#4d7bb0" /><rect x="15" y="15" width="7" height="7" fill="#5b9a5f" /><path d="M18.500 16.500v4M16.500 18.500h4" stroke="#fff" /></g>,
  <path d="M9 3h6v6h6v6h-6v6H9v-6H3V9h6zM12 6v12M6 12h12" fill="#dff0df" stroke="#3f8a48" strokeWidth="1.500" />,
  <g><rect x="3" y="8.500" width="18" height="7" fill="#fff" stroke="#e04848" /><rect x="5.500" y="10.800" width="13" height="2.500" fill="#ee4d4d" /></g>,
  <g><path d="M4 3h14v18H4z" fill="#fff" stroke="#aaa" /><path d="M9 20l1-4L18 3l3 2-8 13z" fill="#f2d544" stroke="#8a7a2a" /></g>,
  <text x="12" y="19" textAnchor="middle" fontSize="25" fontWeight="700" fill="#c0c0c0" fontFamily="Liberation Serif">ε</text>,
  <text x="12" y="20" textAnchor="middle" fontSize="22" fontWeight="700" fill="#b8b0b8" fontFamily="Liberation Serif">Σ</text>,
];

/* ---------- rulers ---------- */
const MM = 3.618;
function RulerH() {
  const t = [];
  for (let m = -14; m <= 324; m += 2) t.push(m);
  return (
    <svg width="1250" height="20" className="block shrink-0" shapeRendering="crispEdges">
      {t.map((m) => {
        const x = Math.round(113 - 40 + m * MM);
        const h = m % 20 === 0 ? 19 : m % 10 === 0 ? 7 : 4;
        return <rect key={m} x={x} y={20 - h} width="1" height={h} fill="#333" />;
      })}
      {t.filter((m) => m >= 0 && m % 20 === 0).map((m) => (
        <text key={m} x={114 - 40 + m * MM} y="12" fontSize="11.500" fill="#333" fontFamily="Noto Sans" textLength={String(m).length * 5.8} lengthAdjust="spacingAndGlyphs">{m}</text>
      ))}
      <rect x="1234" y="0" width="1" height="20" fill="#f00" />
    </svg>
  );
}
function RulerV() {
  const t = [];
  for (let m = -12; m <= 224; m += 2) t.push(m);
  return (
    <svg width="19" height="872" className="block shrink-0" shapeRendering="crispEdges">
      {t.map((m) => {
        const y = Math.round(188 - 140 + m * MM);
        const w = m % 20 === 0 ? 19 : m % 10 === 0 ? 7 : 4;
        return <rect key={m} x={19 - w} y={y} width={w} height="1" fill="#333" />;
      })}
      {t.filter((m) => m >= 0 && m % 20 === 0).map((m) => {
        const len = String(m).length * 5.8;
        return <text key={m} transform={`translate(11.500 ${50 + m * MM + len}) rotate(-90)`} fontSize="11.500" fill="#333" fontFamily="Noto Sans" textLength={len} lengthAdjust="spacingAndGlyphs">{m}</text>;
      })}
      <rect x="0" y="482" width="19" height="1" fill="#f00" />
    </svg>
  );
}

/* ---------- page on the canvas ---------- */
const key = [
  [209, 803, "#ffffff", "centro_sul", 68.5], [209, 878, "#284f14", "3 - Formação Florestal", 150], [209, 902, "#32cd32", "4 - Formação Savânica", 152.5],
  [514, 803, "#b8af4f", "12 - Formação Campestre", 173], [514, 826.5, "#ffd966", "15 - Pastagem", 97], [514, 850, "#ffefc3", "21 - Mosaico de Agricultura e Pastagem", 265],
  [514, 873.5, "#af2a2a", "24 - Infraestrutura Urbana", 177], [514, 897, "#ff99ff", "25 - Outra Área não Vegetada", 201],
  [819, 803, "#ff8c00", "29 - Afloramento Rochoso", 174], [819, 826.5, "#0000ff", "33 - Rio, Lago e Oceano", 162], [819, 850, "#f5b3f0", "36 - Lavoura Perene", 135],
  [819, 873.5, "#e787f8", "41 - Outras Lavouras Temporárias", 229],
];
const handles = [[202, 783], [658, 783], [1115, 783], [202, 848], [1115, 848], [202, 914], [658, 914], [1115, 914]];
const PX = 59, PY = 140;
const mapText = "font-['DejaVu_Sans_Condensed','Noto_Sans',sans-serif] text-[14px] text-black";

function Canvas() {
  return (
    <div className="relative h-[858px] w-[1216px] overflow-hidden bg-[#d7d7d7]">
      <div className="absolute left-[59px] top-[53px] h-[761px] w-[1076px] bg-[#969696]" />
      <div className="absolute left-[54px] top-[48px] h-[761px] w-[1076px] bg-white" />
      <MapDrawing />
      <svg className="absolute left-[400px] top-[115px]" width="50" height="60" viewBox="459 255 50 60">
        <path d="M482.300 261v29.700L464 308.700z" fill="#dcdcdc" />
        <path d="M482.300 261L500.700 308.700 482.300 290.700 464 308.700z" fill="none" stroke="#000" strokeWidth="1.600" />
      </svg>
      <div className={"absolute left-[256px] top-[547px] w-[180px] leading-[20px] " + mapText}>
        <div className="flex">
          <Fit w={8} className="mr-[53px]">0</Fit><Fit w={16} className="mr-[48px]">25</Fit><Fit w={40}>50 km</Fit>
        </div>
        <div className="ml-[3px] mt-[6px] flex h-[12px] w-[131px] border border-black bg-white"><div className="w-[65px] bg-black" /></div>
      </div>
      {key.map(([x, y, c, t, w]) => (
        <div key={t} className={"absolute flex h-[15px] items-center gap-[6px] leading-[15px] " + mapText} style={{ left: x - PX, top: y - PY }}>
          <div className="h-[15px] w-[26px] border-[1.5px] border-[#333]" style={{ background: c }} /><Fit w={w}>{t}</Fit>
        </div>
      ))}
      <Fit w={106} className={"absolute left-[150px] top-[688px] leading-[20px] " + mapText}>mde_centro_sul</Fit>
      <Fit w={172} className={"absolute left-[150px] top-[714px] leading-[20px] " + mapText}>uso_cobertura_centro_sul</Fit>
      <svg className="absolute left-[143px] top-[643px]" width="925" height="143">
        <rect x=".5" y=".5" width="923" height="141" fill="none" stroke="#3a9bc8" />
        <rect x=".5" y=".5" width="923" height="141" fill="none" stroke="#5a0a38" strokeDasharray="4 2" />
      </svg>
      {handles.map(([x, y]) => (
        <div key={x + "-" + y} className="absolute h-[11px] w-[11px] border border-[#3a8fc0] bg-white" style={{ left: x - PX, top: y - PY }} />
      ))}
    </div>
  );
}

const items = [
  ["<Legend>", 55, "font-bold", <path d="M1 1.500h3v3H1zM1 6h3v3H1zM1 10.500h3v3H1zM6.500 3H12M6.500 7.500h8M6.500 12H10" stroke="#666" strokeWidth="1.400" />],
  ["Seta Norte", 55, "", <g><rect x=".5" y="2.500" width="13" height="10" fill="#fff" stroke="#888" /><path d="M1 3h12v5L9 6 5 5 1 9z" fill="#444" /></g>],
  ["<Barra de Escala>", 91, "", <g><rect x="0" y="6" width="14" height="4" fill="#444" /><rect x="5" y="7" width="4" height="2" fill="#fff" /></g>],
  ["Mapa 1", 38, "", <g><rect x="1.500" y="2" width="12" height="11" fill="#dcdcdc" stroke="#8a8a8a" /><path d="M3.500 2v10" stroke="#999" /></g>],
];

export default function App() {
  return (
    <div className="flex h-[1040px] w-[1920px] flex-col overflow-hidden bg-[#efefef] font-['Noto_Sans','Open_Sans',sans-serif] text-[12px] leading-[16px] text-[#1a1a1a]">
      {/* title bar */}
      <div className="flex h-[23px] shrink-0 items-center bg-white">
        <svg width="19" height="18" viewBox="0 0 19 18" className="ml-[1px] mr-[3px]">
          <circle cx="8.500" cy="8.500" r="6" fill="none" stroke="#6fa52e" strokeWidth="3.600" />
          <path d="M8.500 8.500h4l4.500 5.500v3h-3l-5.500-5z" fill="#8cc044" stroke="#fff" strokeWidth=".7" /><path d="M8 8h3.500v2L9.500 11 8 10z" fill="#ee7913" />
        </svg>
        <Fit w={34}>*mapa</Fit>
        <div className="ml-auto flex gap-[34px] pr-[19px]">
          <svg width="12" height="12"><path d="M1 5.500h9" stroke="#111" /></svg>
          <svg width="12" height="12" fill="none" stroke="#111"><path d="M1.500 3.500h6v6h-6zM3.500 3.500v-2h6v6h-2" /></svg>
          <svg width="12" height="12"><path d="M1 1l9 9M10 1l-9 9" stroke="#111" strokeWidth="1.100" /></svg>
        </div>
      </div>
      {/* menu */}
      <div className="flex h-[20px] shrink-0 items-center border-b border-[#d2d2d2] pl-[10px] text-black">
        {[["Layout", 36, 14], ["Editar", 30, 14], ["Visão", 28, 14], ["Itens", 25, 14], ["Adicionar Item", 78, 14], ["Atlas", 26, 14], ["Configurações", 77, 0]].map(([t, w, g], i) => (
          <div key={t} style={{ marginRight: g }}>
            <Fit w={w}>{i < 5 ? <><u className="underline-offset-2">{t[0]}</u>{t.slice(1)}</> : t}</Fit>
          </div>
        ))}
      </div>
      {/* toolbars */}
      <div className="flex h-[39px] shrink-0 items-center border-b border-[#b4b4b4] bg-linear-to-b from-[#fafafa] to-[#efefef]">
        <Grip className="w-[12px]" />
        <Tool n="save" /><Sep /><Tool n="layoutNew" /><Tool n="layoutDup" /><Tool n="layoutMgr" /><Tool n="folder" /><Tool n="saveAs" /><Sep />
        <Tool n="pageAdd" /><Sep /><Tool n="print" /><Tool n="exImg" /><Tool n="exSvg" /><Tool n="exPdf" /><Tool n="undo" /><Tool n="redo" />
        <Grip className="w-[16px]" />
        <Tool n="atlas" /><Tool n="first" /><Tool n="prev" />
        <div className="flex h-[30px] w-[66px] shrink-0 rounded-[2px] border border-[#a9a9a9] bg-[#efefef] text-[#8a8a8a]">
          <div className="flex w-[45px] items-center border-r border-[#a9a9a9] pl-[4px] pt-[2px]">1</div>
          <div className="flex flex-1 items-center justify-center bg-[#f6f6f6]"><Tri dir="down" className="opacity-60" /></div>
        </div>
        <Tool n="next" /><Tool n="last" /><Tool n="printOff" /><Tool n="exAll" /><Tool n="atlasSet" />
      </div>
      <div className="flex h-[38px] shrink-0 items-center border-b border-[#b4b4b4] bg-linear-to-b from-[#fafafa] to-[#efefef]">
        <Grip className="w-[12px]" />
        <Tool n="zoomIn" /><Tool n="zoomOut" /><Tool n="zoomOne" /><Tool n="zoomFull" /><Tool n="refresh" />
        <Grip className="w-[16px]" />
        <Tool n="lock" /><Tool n="unlock" /><Tool n="group" /><Tool n="ungroup" /><Tool n="raise" /><Tool n="align" /><Tool n="distribute" /><Tool n="resize" />
      </div>

      <div className="flex h-[893px] shrink-0">
        {/* tool column */}
        <div className="flex w-[39px] shrink-0 flex-col items-center border-r border-[#b4b4b4] bg-linear-to-r from-[#fafafa] to-[#efefef] pt-[6px]">
          <div className="mb-[2px] ml-[2px] flex flex-col gap-[2px]"><div className="w-[18px] border-t border-dotted border-[#a8a8a8]" /><div className="w-[18px] border-t border-dotted border-[#a8a8a8]" /></div>
          {["hand", "zoomTool", "select", "moveContent", "editNodes", "map3d", "map", "picture", "label", "legend", "scalebar", "north", "shape", "arrow", "nodes", "html", "table", "fixed"].map((n) => (
            <div key={n} className={"ml-[2px] flex h-[32.060px] w-[32px] shrink-0 items-center justify-center " + (n === "select" ? "rounded-[3px] border border-[#b0b0b0] bg-[#dcdcdc]" : "")}><Svg>{icons[n]}</Svg></div>
          ))}
        </div>
        {/* canvas with rulers */}
        <div className="ml-px flex w-[1249px] shrink-0 flex-col">
          <RulerH />
          <div className="flex">
            <RulerV />
            <div className="w-[1216px] shrink-0">
              <Canvas />
              <div className="flex h-[15px] border-y border-[#b8b8b8] bg-[#e6e6e6]">
                <div className="flex w-[14px] items-center justify-center border-r border-[#b8b8b8] bg-[#fafafa]"><Tri dir="left" /></div>
                <div className="w-[827px] border-r border-[#b8b8b8] bg-linear-to-b from-white to-[#f2f2f2]" />
                <div className="ml-auto flex w-[14px] items-center justify-center border-l border-[#b8b8b8] bg-[#fafafa]"><Tri dir="right" /></div>
              </div>
            </div>
            <div className="flex h-[858px] w-[14px] flex-col border-l border-[#b8b8b8] bg-[#e6e6e6]">
              <div className="flex h-[14px] items-center justify-center border-b border-[#b8b8b8] bg-[#fafafa]"><Tri dir="up" /></div>
              <div className="mt-[3px] h-[626px] border-y border-[#b8b8b8] bg-linear-to-r from-white to-[#f2f2f2]" />
              <div className="mt-auto flex h-[15px] items-center justify-center border-y border-[#b8b8b8] bg-[#fafafa]"><Tri dir="down" /></div>
            </div>
          </div>
        </div>
        <div className="flex w-[6px] shrink-0 items-center justify-center"><div className="h-[16px] border-l border-dotted border-[#aaa]" /></div>

        {/* docks */}
        <div className="flex w-[625px] shrink-0 flex-col">
          <div className="mt-px flex h-[24px] items-end border-b border-[#b4b4b4]"><Tab w={50} t={25} active>Itens</Tab><Tab w={109} t={86}>Desfazer histórico</Tab></div>
          <div className="flex h-[20px] items-center justify-between pl-[4px] pt-[2px]"><Fit w={25}>Itens</Fit><DockButtons /></div>
          <div className="h-[117px] border border-[#b4b4b4] bg-white">
            <div className="flex h-[20px] border-b border-[#a8a8a8] bg-linear-to-b from-white to-[#efefef]">
              <div className="flex w-[36px] items-center border-r border-[#c8c8c8] pl-[3px]"><svg width="15" height="12" viewBox="0 0 15 12"><path d="M.5 6Q7.500-1 14.500 6 7.500 12 .5 6z" fill="#eee" stroke="#999" /><circle cx="7.500" cy="6" r="3.500" fill="#888" /><circle cx="7.500" cy="6" r="1.700" fill="#333" /></svg></div>
              <div className="flex w-[36px] items-center border-r border-[#c8c8c8] pl-[3px]"><svg width="13" height="16" viewBox="0 0 13 16"><path d="M2.500 8V5a4 4 0 0 1 8 0v3" fill="none" stroke="#777" strokeWidth="1.500" /><rect x=".5" y="7.500" width="12" height="8" rx="1" fill="#555" /></svg></div>
              <div className="pl-[2px] pt-px"><Fit w={22}>Item</Fit></div>
            </div>
            {items.map(([t, w, c, ic]) => (
              <div key={t} className="flex h-[18px] items-center pl-[3px]">
                <Check on /><div className="w-[22px]" /><Check /><div className="w-[23px]" /><svg width="15" height="15" fill="none">{ic}</svg><Fit w={w} className={"ml-[7px] -mt-[2px] text-black " + c}>{t}</Fit>
              </div>
            ))}
          </div>
          <div className="flex h-[6px] items-center justify-center"><div className="w-[16px] border-t border-dotted border-[#aaa]" /></div>
          <div className="flex h-[24px] items-end border-b border-[#b4b4b4]"><Tab w={57} t={34}>Layout</Tab><Tab w={127} t={103} active>Propriedades do Item</Tab><Tab w={49} t={26}>Guias</Tab></div>
          <div className="flex h-[20px] items-center justify-between pl-[4px] pt-[2px]"><Fit w={113}>Propriedades do Item</Fit><DockButtons /></div>
          <div className="flex h-[17px] items-center bg-[#c6c6c6] pl-[5px] text-black"><Fit w={48} className="font-bold">Legenda</Fit></div>
          <div className="flex h-[664px] border border-r-0 border-[#b4b4b4]">
            <div className="w-[608px] shrink-0 overflow-hidden">
              <Group className="h-[71px] rounded-t-none border-t-0 px-[12px]">
                <div className="ml-[92px] h-[2px] rounded-b-[3px] border border-t-0 border-[#b0b0b0] bg-[#f4f4f4]" />
                <div className="mt-[6px] flex items-center">
                  <Fit w={36}>Arranjo</Fit>
                  <div className={btn + " ml-auto h-[24px] w-[467px] px-[7px]"}>
                    <svg width="14" height="14" fill="none" className="mr-[3px]"><path d="M0 1h4v3H0zM0 6h4v3H0zM0 11h4v3H0z" fill="#777" /><path d="M6 2.500h6M6 7.500h8M6 12.500h4" stroke="#888" strokeWidth="1.500" /></svg>
                    <Fit w={98}>Símbolos à Esquerda</Fit><Tri dir="down" className="ml-auto" />
                  </div>
                </div>
                <CheckRow on w={195} className="mt-[7px]">Redimensionar para ajustar ao conteúdo</CheckRow>
              </Group>
              <div className="h-[5px]" />
              <Section open w={98}>Itens da Legenda</Section>
              <Group className="h-[383px] px-[12px]">
                <div className="flex items-center justify-between pt-[12px]">
                  <CheckRow w={111}>Atualização automática</CheckRow>
                  <div className={btn + " h-[21px] w-[88px]"}><Fit w={74}>Atualizar Todos</Fit></div>
                </div>
                <div className="mt-[5px] flex h-[251px] border border-[#b4b4b4] bg-white text-black">
                  <div className="h-[249px] flex-1 overflow-hidden pt-[2px]">
                    {[["centro_sul", 53.5], ["mde_centro_sul", 82.5], ["uso_cobertura_centro_sul", 133.5]].map(([t, w], i) => (
                      <div key={t} className="flex h-[18px] items-center pr-px">
                        <div className="w-[23px] pl-[6px]">{i === 2 && <Tri dir="down" />}</div>
                        <div className="flex w-[22px] items-center">{i === 0 ? <div className="h-[16px] w-[16px] border border-[#333]" /> : <div className="pl-[2px]"><Raster /></div>}</div>
                        <Fit w={w}>{t}</Fit><div className="ml-auto h-[16px] w-[3px] bg-[#e2e2e2]" />
                      </div>
                    ))}
                    {legendRows.map(([c, t, w]) => (
                      <div key={t} className="flex h-[18px] items-center pl-[43px]"><div className="mr-[6px] h-[16px] w-[16px]" style={{ background: c }} /><Fit w={w}>{t}</Fit></div>
                    ))}
                  </div>
                  <div className="flex w-[14px] flex-col border-l border-[#b8b8b8] bg-[#e6e6e6]">
                    <div className="flex h-[14px] items-center justify-center border-b border-[#b8b8b8] bg-[#fafafa]"><Tri dir="up" /></div>
                    <div className="h-[217px] border-b border-[#b8b8b8] bg-[#fbfbfb]" />
                    <div className="mt-auto flex h-[14px] items-center justify-center border-t border-[#b8b8b8] bg-[#fafafa]"><Tri dir="down" /></div>
                  </div>
                </div>
                <div className="mt-[5px] flex gap-[3px]">
                  {legendBtns.map((ic, i) => <div key={i} className={btn + " h-[24px] w-[24px] " + (i > 5 ? "opacity-70" : "")}><Svg s={18}>{ic}</Svg></div>)}
                  <div className={btn + " ml-auto mr-[-3px] h-[24px] w-[24px] opacity-70"}><Svg s={20}><text x="2" y="15" fontSize="21" fontWeight="700" fill="#b8b0b8" fontFamily="Liberation Serif">ε</text><path d="M13 13h3v8h-3zM18 13h3v8h-3z" fill="#cdcdcd" /></Svg></div>
                  <div className={btn + " h-[24px] w-[12px] opacity-70"}><Tri dir="down" s={7} /></div>
                </div>
                <CheckRow w={217} className="mt-[7px]">Mostras apenas itens dentro do mapa lincado</CheckRow>
                <CheckRow w={251} className="mt-[9px]">Mostrar apenas itens dentro do elemento atlas atual</CheckRow>
              </Group>
              <div className="h-[5px]" />
              <Section w={172}>Fontes e Formatação do Texto</Section>
              <div className="h-[7px]" />
              <Section open w={44}>Colunas</Section>
              <Group className="mt-px h-[103px] px-[12px]">
                <div className="flex items-center pt-[15px]">
                  <Fit w={49}>Contagem</Fit>
                  <div className="ml-[6px] flex h-[20px] w-[72px] overflow-hidden rounded-[3px] border border-[#b0b0b0] bg-white">
                    <div className="flex flex-1 items-center justify-between pl-[4px] pr-[10px]"><span>3</span><svg width="14" height="10"><path d="M0 5l4-5h10v10H4z" fill="#909090" /><path d="M6 2.500l5 5M11 2.500l-5 5" stroke="#fff" strokeWidth="1.200" /></svg></div>
                    <div className="flex w-[14px] flex-col items-center justify-center gap-[2px] border-l border-[#b0b0b0]"><Tri dir="up" s={7} /><Tri dir="down" s={7} /></div>
                  </div>
                  <svg width="24" height="18" className="ml-[10px]" fill="none"><path d="M5 3L0 8.500 5 14z" fill="#888" /><path d="M5 .5h12v15H5z" stroke="#666" fill="#f4f4f4" /><path d="M7 4.500h8M7 8.500h8M7 12.500h8" stroke="#666" strokeWidth="1.500" /><path d="M16 13h6l-3 3.500z" fill="#444" /></svg>
                </div>
                <CheckRow on w={129} className="mt-[10px]">Equalizar largura da coluna</CheckRow>
                <CheckRow on w={74} className="mt-[9px]">Dividir camadas</CheckRow>
              </Group>
              <div className="h-[5px]" />
              <Section w={45}>Símbolo</Section>
            </div>
            <div className="flex flex-1 flex-col border-l border-[#b8b8b8] bg-[#e6e6e6]">
              <div className="flex h-[14px] items-center justify-center border-b border-[#b8b8b8] bg-[#fafafa]"><Tri dir="up" /></div>
              <div className="mt-[74px] h-[402px] border-y border-[#b8b8b8] bg-linear-to-r from-white to-[#f2f2f2]" />
              <div className="mt-auto flex h-[14px] items-center justify-center border-t border-[#b8b8b8] bg-[#fafafa]"><Tri dir="down" /></div>
            </div>
          </div>
        </div>
      </div>

      {/* status bar */}
      <div className="flex h-[27px] shrink-0 items-center pl-[6px]">
        <Fit w={99}>1 item selecionado</Fit>
        <div className="ml-auto flex items-center pr-[1px]">
          <Fit w={72} className="mr-[34px]">x: 320.613 mm</Fit><Fit w={66} className="mr-[39px]">y: 119.85 mm</Fit><Fit w={46} className="mr-[61px]">página: 1</Fit>
          <div className="flex h-[22px] w-[155px] rounded-[2px] border border-[#a9a9a9] bg-white">
            <div className="flex flex-1 items-center pl-[3px]"><Fit w={33}>95.8%</Fit></div>
            <div className="flex w-[20px] items-center justify-center border-l border-[#b8b8b8] bg-[#f6f6f6]"><Tri dir="down" /></div>
          </div>
          <div className="ml-[8px] mr-[1px] flex w-[98px] items-center">
            <div className="h-[6px] w-[8px] rounded-l border border-[#1d6fb8] bg-[#3d9be8]" />
            <div className="h-[13px] w-[13px] rounded-[3px] border border-[#a0a0a0] bg-white" />
            <div className="h-[6px] flex-1 rounded-r border border-[#b8b8b8] bg-[#dadada]" />
          </div>
        </div>
      </div>
    </div>
  );
}
